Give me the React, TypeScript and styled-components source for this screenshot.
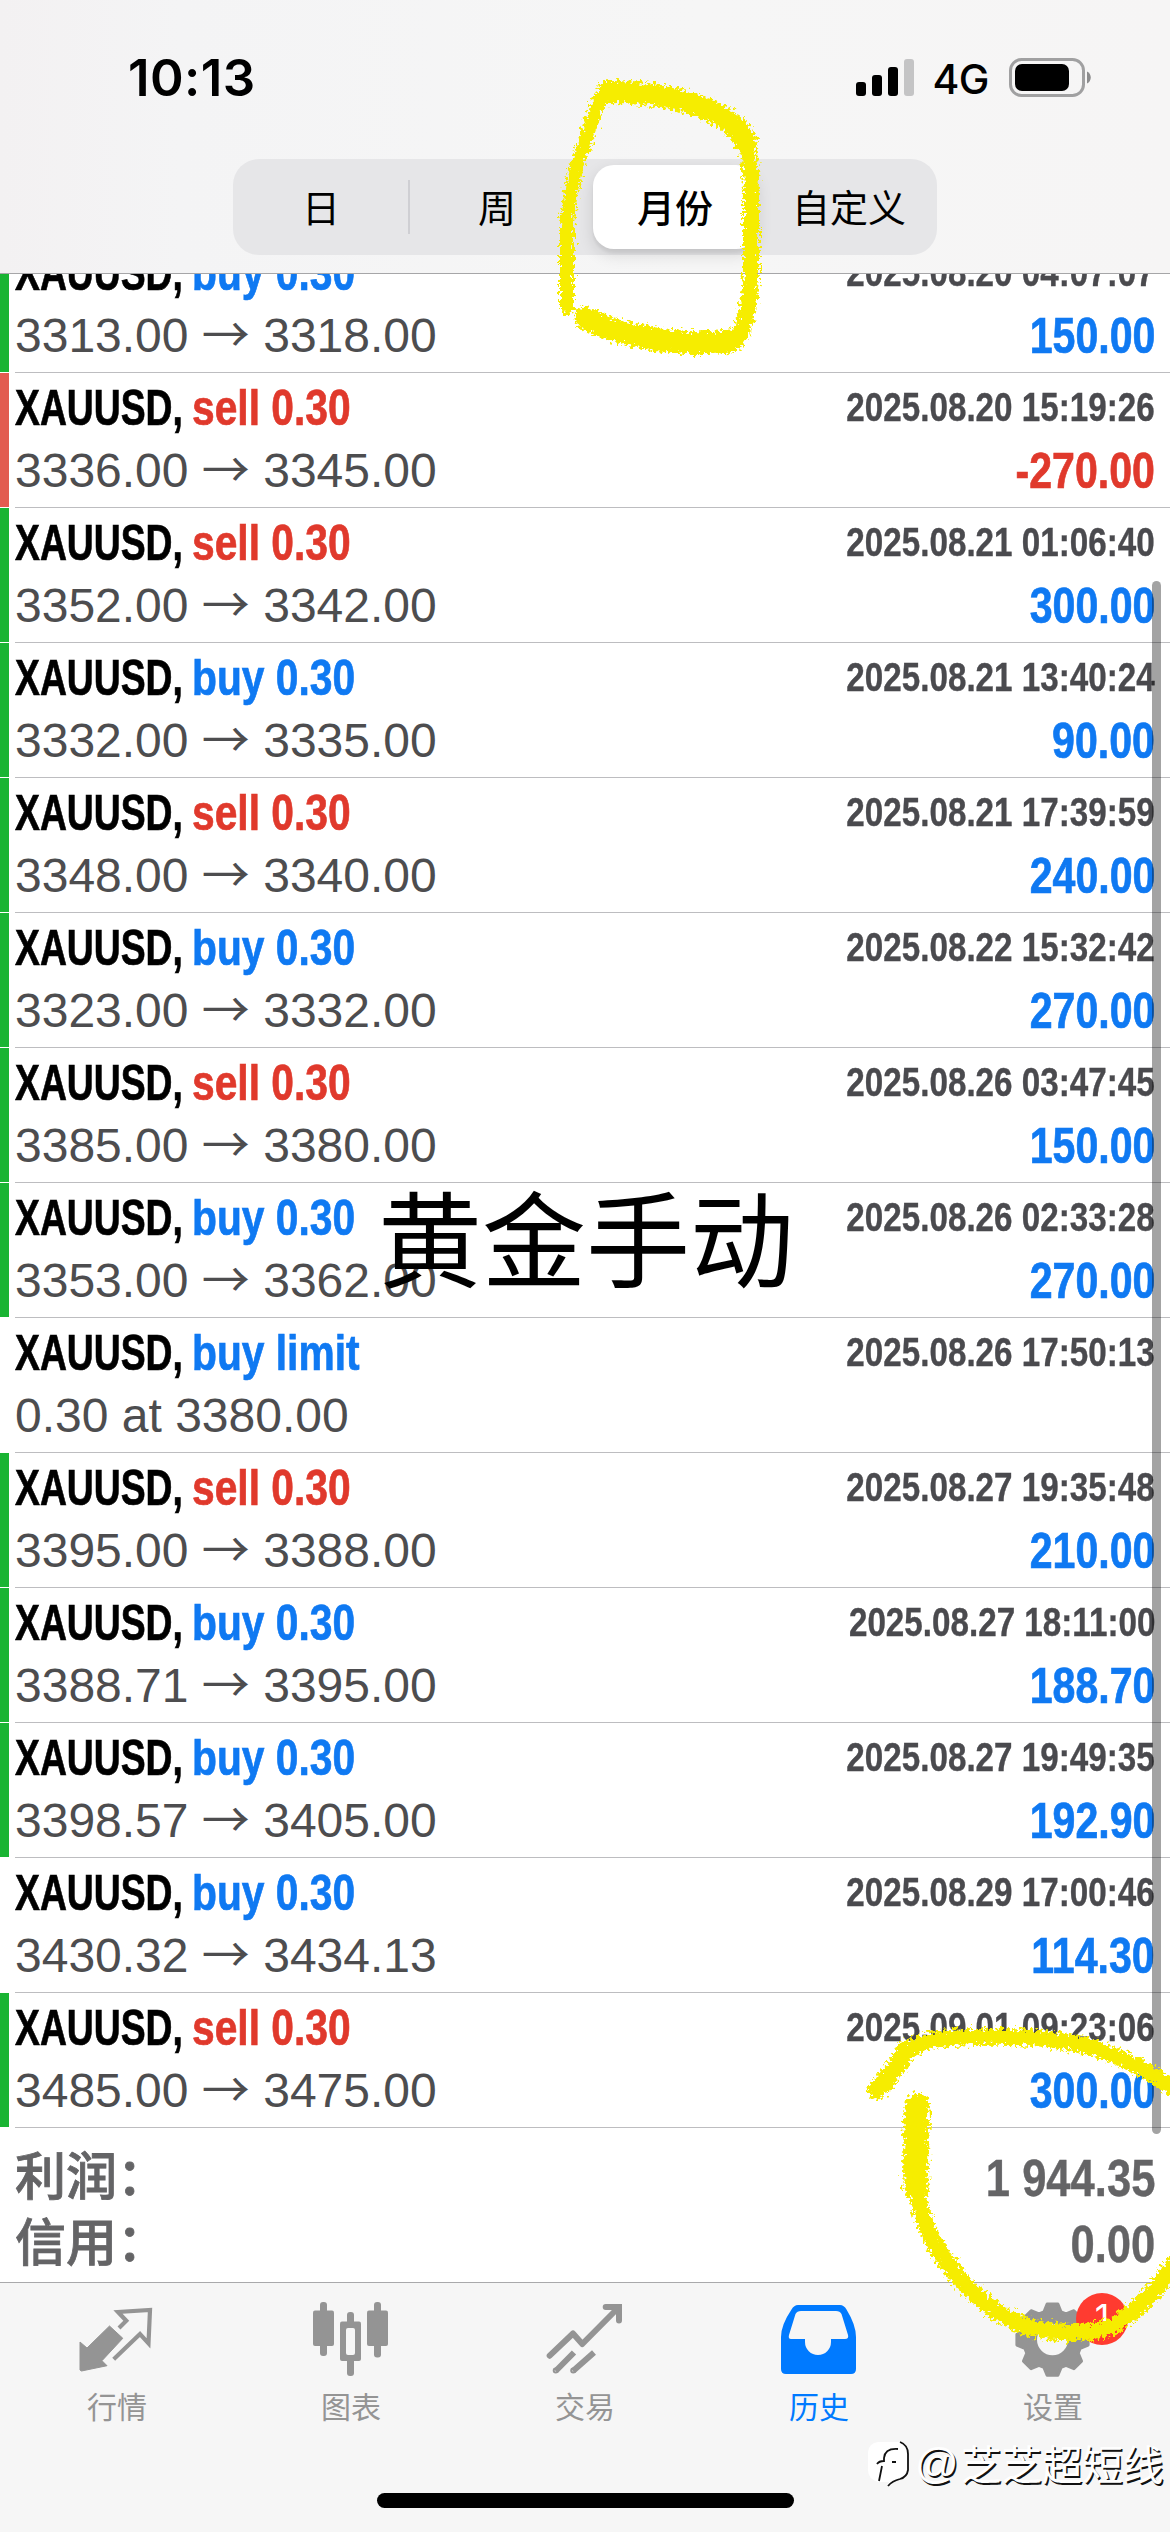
import React from "react";
import styled, { createGlobalStyle } from "styled-components";

const latin = `"Liberation Sans", "Noto Sans CJK SC", sans-serif`;
const cjk = `"Noto Sans CJK SC", sans-serif`;
const BLUE = "#0f79f2";
const RED = "#e0392c";

const Global = createGlobalStyle`
  * { box-sizing: border-box; }
  html, body { margin: 0; padding: 0; background: #fff; }
`;

const Screen = styled.div`
  position: relative;
  display: flex;
  flex-direction: column;
  width: 1170px;
  height: 2532px;
  overflow: hidden;
  background: #fff;
  font-family: ${latin};
`;

const Header = styled.header`
  display: flex;
  flex-direction: column;
  align-items: center;
  flex: none;
  height: 274px;
  border-bottom: 1px solid #a6a6a8;
  background: linear-gradient(90deg, #f3f1f2 0, #f4f4f5 180px, #f6f6f6 700px, #f6f5f5 100%);
`;

const StatusBar = styled.div`
  display: flex;
  justify-content: space-between;
  align-items: center;
  align-self: stretch;
  height: 159px;
  padding: 0 79px 3px 128px;
`;

const Clock = styled.div`
  font: 600 51px/60px Inter, sans-serif;
  letter-spacing: 0.4px;
  color: #000;
`;

const StatusIcons = styled.div`
  display: flex;
  align-items: center;
`;

const Network = styled.span`
  margin: 2px 19px 0 18px;
  font: 500 41px/50px Inter, sans-serif;
  letter-spacing: -0.5px;
`;

const Segments = styled.nav`
  display: flex;
  flex: none;
  width: 704px;
  height: 96px;
  border-radius: 26px;
  background: #e6e6e8;
`;

const Segment = styled.div<{ $active?: boolean; $divided?: boolean }>`
  display: flex;
  align-items: center;
  justify-content: center;
  flex: none;
  width: ${(p) => (p.$active ? 164 : 176)}px;
  margin: ${(p) => (p.$active ? "6px 4px 6px 8px" : "0")};
  padding-bottom: 3px;
  border-radius: 21px;
  background: ${(p) => (p.$active ? "#fff" : "none")};
  box-shadow: ${(p) => (p.$active ? "0 6px 16px rgba(0,0,0,.12), 0 4px 3px rgba(0,0,0,.05)" : "none")};
  font: ${(p) => (p.$active ? 500 : 400)} 38px/50px ${cjk};
  color: #000;
  &::after {
    content: "";
    display: ${(p) => (p.$divided ? "block" : "none")};
    width: 2px;
    height: 54px;
    margin: 2px -1px 0 auto;
    background: #cfcfd3;
  }
  &::before {
    content: "";
    display: ${(p) => (p.$divided ? "block" : "none")};
    width: 1px;
    margin-right: auto;
  }
`;

const List = styled.main`
  flex: none;
  height: 1854px;
  overflow: hidden;
`;

const Row = styled.article`
  display: flex;
  height: 135px;
  &:first-child { margin-top: -36px; }
`;

const Stripe = styled.i<{ $color: string }>`
  flex: none;
  width: 9px;
  height: 134px;
  margin-right: 6px;
  background: ${(p) => p.$color};
`;

const RowBody = styled.div`
  display: flex;
  justify-content: space-between;
  flex: 1;
  padding: 9px 15px 0 0;
  border-bottom: 1px solid #bdbdc0;
`;

const Left = styled.div`
  display: flex;
  flex-direction: column;
`;

const Right = styled.div`
  display: flex;
  flex-direction: column;
  align-items: flex-end;
`;

const Title = styled.div`
  display: flex;
  height: 63px;
  font: bold 50px/52px ${latin};
  -webkit-text-stroke: 0.7px currentColor;
  white-space: pre;
`;

const SymbolName = styled.span`
  width: 177px;
  color: #000;
  transform: scaleX(0.746);
  transform-origin: left;
`;

const Side = styled.span<{ $color: string }>`
  color: ${(p) => p.$color};
  transform: scaleX(0.815);
  transform-origin: left;
`;

const Prices = styled.div`
  height: 52px;
  font: 48px/52px ${latin};
  color: #4d4d4f;
  white-space: pre;
`;

const Arrow = styled.span`
  font-family: ${cjk};
  line-height: 1px;
`;

const Time = styled.div`
  height: 63px;
  font: bold 41px/51px ${latin};
  color: #4a4a4e;
  transform: scaleX(0.81);
  transform-origin: right;
  white-space: pre;
  -webkit-text-stroke: 0.4px currentColor;
`;

const Profit = styled.div<{ $color: string }>`
  font: bold 49.5px/52px ${latin};
  color: ${(p) => p.$color};
  transform: scaleX(0.83);
  transform-origin: right;
  -webkit-text-stroke: 0.7px currentColor;
`;

const ScrollThumb = styled.i`
  position: absolute;
  z-index: 2;
  left: 1152px;
  top: 581px;
  width: 9px;
  height: 1553px;
  border-radius: 5px;
  background: rgba(0, 0, 0, 0.36);
`;

const Summary = styled.section`
  display: flex;
  flex-direction: column;
  flex: none;
  height: 154px;
  padding: 16px 15px 0 15px;
`;

const SummaryLine = styled.div`
  display: flex;
  justify-content: space-between;
  height: 66px;
  color: #646466;
`;

const SummaryLabel = styled.span`
  height: 58px;
  font: 500 51px/58px ${cjk};
  -webkit-text-stroke: 0.8px currentColor;
`;

const SummaryValue = styled.span`
  font: bold 52px/68px ${latin};
  transform: scaleX(0.838);
  transform-origin: right;
  -webkit-text-stroke: 0.4px currentColor;
`;

const TabBar = styled.footer`
  display: flex;
  flex-direction: column;
  align-items: center;
  flex: 1;
  border-top: 1px solid #a9a9ab;
  background: #f6f6f6;
`;

const Tabs = styled.nav`
  display: flex;
  align-self: stretch;
  height: 210px;
  padding-top: 17px;
`;

const Tab = styled.div<{ $active?: boolean }>`
  position: relative;
  display: flex;
  flex-direction: column;
  align-items: center;
  flex: 1;
  gap: 3px;
  color: ${(p) => (p.$active ? "#007aff" : "#949494")};
  font: 30px/44px ${cjk};
`;

const Badge = styled.span`
  position: absolute;
  left: 140px;
  top: -7px;
  width: 52px;
  height: 52px;
  border-radius: 50%;
  background: #ff3b30;
  color: #fff;
  text-align: center;
  font: 36px/48px Inter, sans-serif;
`;

const HomeIndicator = styled.i`
  width: 417px;
  height: 15px;
  border-radius: 8px;
  background: #000;
`;

const Caption = styled.div`
  position: absolute;
  z-index: 3;
  left: 378px;
  top: 1173px;
  font: 104px/124px ${cjk};
  color: #000;
  white-space: nowrap;
`;

const Watermark = styled.div`
  position: absolute;
  z-index: 4;
  left: 867px;
  top: 2437px;
  display: flex;
  align-items: center;
  color: #fff;
  font: 40.5px/52px ${cjk};
  white-space: nowrap;
  text-shadow: 1.5px 1.5px 0.5px #111;
`;

const At = styled.span`
  width: 46px;
  margin-left: 2px;
  font: 43px/48px ${latin};
`;

const Marker = styled.svg`
  position: absolute;
  z-index: 5;
  inset: 0;
  pointer-events: none;
`;

const SignalIcon = () => (
  <svg width="58" height="38" viewBox="0 0 58 38">
    <rect x="0" y="23" width="10" height="14" rx="3" />
    <rect x="16" y="16" width="10" height="21" rx="3" />
    <rect x="32" y="8" width="10" height="29" rx="3" />
    <rect x="48" y="0" width="10" height="37" rx="3" fill="#c4c4c5" />
  </svg>
);

const BatteryIcon = () => (
  <svg width="83" height="40" viewBox="0 0 83 40">
    <rect x="2.500" y="1.500" width="73" height="36" rx="11" fill="none" stroke="#a0a0a1" strokeWidth="3" />
    <rect x="7" y="6" width="54" height="27" rx="7" />
    <path d="M79 13.500c5 2 5 10 0 12z" fill="#8c8c8d" />
  </svg>
);

const QuotesIcon = () => (
  <svg width="90" height="80" viewBox="0 0 90 80">
    <path d="M37.500 26L50.800 38.300 30 60.700 35 65.700 9.500 71 8 70V42l7 6z" fill="#949494" stroke="#949494" strokeLinejoin="round" />
    <path d="M47 28l7.300-7.300L46 12l32-2-1.500 33.300L68 34 41.700 59.300" fill="none" stroke="#949494" strokeWidth="4.200" />
  </svg>
);

const ChartIcon = () => (
  <svg width="90" height="80" viewBox="0 0 90 80" fill="#949494">
    <rect x="7" y="10.500" width="21" height="35.500" rx="2" />
    <rect x="14" y="2" width="7" height="54" rx="3" />
    <rect x="41" y="12" width="7" height="64" rx="3" />
    <rect x="34" y="21.500" width="21" height="39.500" rx="2" />
    <rect x="40" y="28" width="9" height="27" rx="2" fill="#f6f6f6" />
    <rect x="61" y="10.500" width="21" height="35.500" rx="2" />
    <rect x="68" y="2" width="7" height="55.500" rx="3" />
  </svg>
);

const TradeIcon = () => (
  <svg width="90" height="80" viewBox="0 0 90 80" fill="none" stroke="#949494" strokeWidth="6" strokeLinejoin="round">
    <path d="M9.700 55.700L33 33.500l9.300 10.500L78 8" strokeLinecap="round" />
    <path d="M65.700 7H79v13.500" strokeLinecap="round" strokeLinejoin="miter" />
    <path d="M34 52.500L15.700 71M54 52.500L33 71" />
    <circle cx="15.700" cy="70.500" r="1" strokeWidth="4" />
    <circle cx="33.200" cy="70.500" r="1" strokeWidth="4" />
  </svg>
);

const HistoryIcon = () => (
  <svg width="90" height="80" viewBox="0 0 90 80" fill="#007aff" fillRule="evenodd">
    <path d="M24 5h42q4 0 6.500 4.500Q82 25 82 37v32q0 5-5 5H12q-5 0-5-5V37Q7 25 17.500 9.500 20 5 24 5zM27 11q-4 0-5.500 3L15 35q-1 4 2 4h14v3a13 13 0 0 0 26 0v-3h14q4 0 3-4L67.500 14q-1.500-3-5.500-3z" />
  </svg>
);

const gearPoints = () => {
  const pts: string[] = [];
  for (let i = 0; i < 8; i++) {
    const base = (i * Math.PI) / 4 - Math.PI / 2;
    [[-0.3, 29], [-0.15, 36], [0.15, 36], [0.3, 29]].forEach(([a, r]) =>
      pts.push(`${(44.5 + r * Math.cos(base + a)).toFixed(1)},${(39.7 + r * Math.sin(base + a)).toFixed(1)}`)
    );
  }
  return pts.join(" ");
};

const SettingsIcon = () => (
  <svg width="90" height="80" viewBox="0 0 90 80">
    <polygon points={gearPoints()} fill="#949494" stroke="#949494" strokeWidth="3" strokeLinejoin="round" />
    <circle cx="44.500" cy="39.700" r="15.500" fill="#f6f6f6" />
  </svg>
);

const WatermarkLogo = () => (
  <svg width="46" height="50" viewBox="0 0 46 50" fill="none">
    <path d="M11 4h22q8 2 8 12v16q0 8-8 10l-12 5 1-3H11Q1 41 1 32V14Q2 5 11 4z" fill="#fff" />
    <path d="M33 4q8 3 8 12v16q-1 7-8 9-8 2-12 7" stroke="#111" strokeWidth="1.800" />
    <path d="M31 11q-13-1-14 9v3q-5 0-7 3M15 28l-3 15M25 24h4" stroke="#111" strokeWidth="1.800" />
  </svg>
);

type Deal = { side: string; kind: "buy" | "sell"; time: string; profit?: string; from: string; to?: string; stripe?: string };
const GREEN = "#19b433";
const deals: Deal[] = [
  { side: "buy 0.30", kind: "buy", time: "2025.08.20 04:07:07", from: "3313.00", to: "3318.00", profit: "150.00", stripe: GREEN },
  { side: "sell 0.30", kind: "sell", time: "2025.08.20 15:19:26", from: "3336.00", to: "3345.00", profit: "-270.00", stripe: "#e25b50" },
  { side: "sell 0.30", kind: "sell", time: "2025.08.21 01:06:40", from: "3352.00", to: "3342.00", profit: "300.00", stripe: GREEN },
  { side: "buy 0.30", kind: "buy", time: "2025.08.21 13:40:24", from: "3332.00", to: "3335.00", profit: "90.00", stripe: GREEN },
  { side: "sell 0.30", kind: "sell", time: "2025.08.21 17:39:59", from: "3348.00", to: "3340.00", profit: "240.00", stripe: GREEN },
  { side: "buy 0.30", kind: "buy", time: "2025.08.22 15:32:42", from: "3323.00", to: "3332.00", profit: "270.00", stripe: GREEN },
  { side: "sell 0.30", kind: "sell", time: "2025.08.26 03:47:45", from: "3385.00", to: "3380.00", profit: "150.00", stripe: GREEN },
  { side: "buy 0.30", kind: "buy", time: "2025.08.26 02:33:28", from: "3353.00", to: "3362.00", profit: "270.00", stripe: GREEN },
  { side: "buy limit", kind: "buy", time: "2025.08.26 17:50:13", from: "0.30 at 3380.00" },
  { side: "sell 0.30", kind: "sell", time: "2025.08.27 19:35:48", from: "3395.00", to: "3388.00", profit: "210.00", stripe: GREEN },
  { side: "buy 0.30", kind: "buy", time: "2025.08.27 18:11:00", from: "3388.71", to: "3395.00", profit: "188.70", stripe: GREEN },
  { side: "buy 0.30", kind: "buy", time: "2025.08.27 19:49:35", from: "3398.57", to: "3405.00", profit: "192.90", stripe: GREEN },
  { side: "buy 0.30", kind: "buy", time: "2025.08.29 17:00:46", from: "3430.32", to: "3434.13", profit: "114.30" },
  { side: "sell 0.30", kind: "sell", time: "2025.09.01 09:23:06", from: "3485.00", to: "3475.00", profit: "300.00", stripe: GREEN },
];

const DealRow = ({ deal }: { deal: Deal }) => (
  <Row>
    <Stripe $color={deal.stripe ?? "transparent"} />
    <RowBody>
      <Left>
        <Title>
          <SymbolName>XAUUSD,</SymbolName>
          <Side $color={deal.kind === "buy" ? BLUE : RED}>{deal.side}</Side>
        </Title>
        <Prices>
          {deal.from}
          {deal.to && (
            <>
              {" "}
              <Arrow>→</Arrow> {deal.to}
            </>
          )}
        </Prices>
      </Left>
      <Right>
        <Time>{deal.time}</Time>
        {deal.profit && <Profit $color={deal.profit.startsWith("-") ? RED : BLUE}>{deal.profit}</Profit>}
      </Right>
    </RowBody>
  </Row>
);

const MarkerStrokes = () => (
  <Marker width="1170" height="2532" viewBox="0 0 1170 2532" fill="none" stroke="#f6ed02" strokeLinecap="round" strokeLinejoin="round">
    <defs>
      <filter id="crayon" x="0" y="0" width="1170" height="2532" filterUnits="userSpaceOnUse">
        <feTurbulence type="fractalNoise" baseFrequency="0.3" numOctaves="3" seed="4" result="n" />
        <feDisplacementMap in="SourceGraphic" in2="n" scale="14" xChannelSelector="R" yChannelSelector="G" />
      </filter>
    </defs>
    <g filter="url(#crayon)">
      <path d="M605 90C594 110 589 130 583 149C574 172 567 205 567 230V308" strokeWidth="14" />
      <path d="M608 92C650 92 690 100 718 114Q738 126 746 142" strokeWidth="22" />
      <path d="M746 138Q751 155 751 210V275Q749 315 739 338" strokeWidth="16" />
      <path d="M586 318Q605 330 640 336Q680 346 732 341" strokeWidth="23" />
      <path d="M877 2090Q898 2068 906 2050" strokeWidth="19" />
      <path d="M906 2054Q918 2040 950 2038C1010 2035 1070 2037 1105 2052Q1140 2065 1172 2087" strokeWidth="16" />
      <path d="M917 2106Q915 2150 916 2188" strokeWidth="25" />
      <path d="M917 2185Q920 2225 944 2258C965 2288 990 2313 1025 2326Q1070 2338 1108 2328Q1142 2312 1174 2264" strokeWidth="17" />
    </g>
  </Marker>
);

export default function App() {
  return (
    <Screen>
      <Global />
      <Header>
        <StatusBar>
          <Clock>10:13</Clock>
          <StatusIcons>
            <SignalIcon />
            <Network>4G</Network>
            <BatteryIcon />
          </StatusIcons>
        </StatusBar>
        <Segments>
          <Segment $divided>日</Segment>
          <Segment>周</Segment>
          <Segment $active>月份</Segment>
          <Segment>自定义</Segment>
        </Segments>
      </Header>
      <List>
        {deals.map((d) => (
          <DealRow key={d.time} deal={d} />
        ))}
      </List>
      <Summary>
        <SummaryLine>
          <SummaryLabel>利润：</SummaryLabel>
          <SummaryValue>1 944.35</SummaryValue>
        </SummaryLine>
        <SummaryLine>
          <SummaryLabel>信用：</SummaryLabel>
          <SummaryValue>0.00</SummaryValue>
        </SummaryLine>
      </Summary>
      <TabBar>
        <Tabs>
          <Tab><QuotesIcon />行情</Tab>
          <Tab><ChartIcon />图表</Tab>
          <Tab><TradeIcon />交易</Tab>
          <Tab $active><HistoryIcon />历史</Tab>
          <Tab><SettingsIcon />设置<Badge>1</Badge></Tab>
        </Tabs>
        <HomeIndicator />
      </TabBar>
      <ScrollThumb />
      <Caption>黄金手动</Caption>
      <Watermark><WatermarkLogo /><At>@</At>芝芝超短线</Watermark>
      <MarkerStrokes />
    </Screen>
  );
}
